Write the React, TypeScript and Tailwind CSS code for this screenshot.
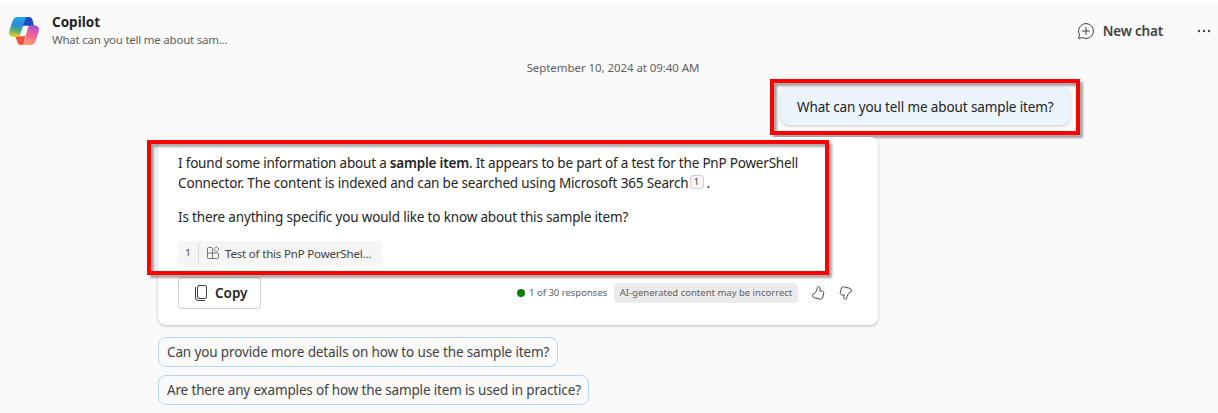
import React from 'react';

function CopilotLogo() {
  return (
    <svg className="h-8 w-8 shrink-0" viewBox="0 0 32 32" fill="none">
      <defs>
        <linearGradient id="left" x1="9" y1="2" x2="6" y2="21" gradientUnits="userSpaceOnUse">
          <stop offset="0" stopColor="#1aa7ee" />
          <stop offset="0.4" stopColor="#2b8bdc" />
          <stop offset="0.7" stopColor="#4fae75" />
          <stop offset="1" stopColor="#e8cb2e" />
        </linearGradient>
        <linearGradient id="right" x1="26" y1="10" x2="19" y2="30" gradientUnits="userSpaceOnUse">
          <stop offset="0" stopColor="#a44fe6" />
          <stop offset="0.45" stopColor="#ee5f94" />
          <stop offset="1" stopColor="#ffa070" />
        </linearGradient>
      </defs>
      <path d="M15 2h6c2 0 3 1 3.600 3l1.400 6h-11z" fill="#1e49c9" />
      <path d="M7 21h10l-1 9h-3c-2 0-3-1-3.500-3z" fill="#f2503f" />
      <path d="M9.500 2H20c-1.500 0-2.500 1.200-3.200 3.500L12 20c-.6 1.500-1.600 2-3 2H5.500c-4 0-5.200-2.500-4-6.500L4 7.500C5 4 6.800 2 9.500 2z" fill="url(#left)" />
      <path d="M22.500 30H13c1.500 0 2.500-1.200 3.200-3.500L20 12.500c.6-1.500 1.600-2 3-2h3.500c4 0 5.200 2.500 4 6.500L28 25c-1 3.500-2.800 5-5.500 5z" fill="url(#right)" />
      <path d="M16.800 10.800h4.200c-1.300.5-1.700 1.500-2.200 3L17 19.700c-.4 1.100-1 1.600-2 1.600h-4c1.200-.5 1.700-1.500 2.200-3l1.700-5.700c.4-1.200.9-1.800 1.900-1.800z" fill="#fff" />
    </svg>
  );
}

function NewChatIcon() {
  return (
    <svg className="h-5 w-5" viewBox="0 0 20 20" fill="none" stroke="#424242" strokeLinecap="round" strokeLinejoin="round">
      <path d="M10 2.500a7.500 7.500 0 1 1-3.500 14.130L2.600 17.500l.9-3.800A7.500 7.500 0 0 1 10 2.500z" />
      <path d="M10 6.500v7M6.500 10h7" />
    </svg>
  );
}

function AppsIcon() {
  return (
    <svg className="h-4 w-4" viewBox="0 0 16 16" fill="none" stroke="#757575" strokeLinejoin="round">
      <path d="M7.500 8V3.500a1 1 0 0 0-1-1h-3a1 1 0 0 0-1 1v9a1 1 0 0 0 1 1h9a1 1 0 0 0 1-1V9a1 1 0 0 0-1-1h-10M7.500 8v5.500" />
      <path d="M11.400 1.800l2.600 2.600-2.600 2.600-2.600-2.600z" />
    </svg>
  );
}

function CopyIcon() {
  return (
    <svg className="h-5 w-5" viewBox="0 0 20 20" fill="none" stroke="#424242" strokeLinecap="round">
      <rect x="6.500" y="2.500" width="9" height="13" rx="1.500" />
      <path d="M4.500 4.500v10.500a2.500 2.500 0 0 0 2.500 2.500h6.500" />
    </svg>
  );
}

function ThumbIcon({ down = false }: { down?: boolean }) {
  return (
    <svg className={down ? 'h-4 w-4 rotate-180' : 'h-4 w-4'} viewBox="0 0 16 16" fill="none" stroke="#424242" strokeLinejoin="round">
      <path d="M8.500 1.600c1.300 0 1.800 1.200 1.600 2.500L9.700 6h2.100c1.400 0 2.200 1 1.900 2.400l-.9 3.600c-.4 1.700-1.700 2.500-3.300 2.100l-5.300-1.500c-.9-.3-1.300-.8-1.500-1.700-.2-1.200.2-1.900 1.300-2.300C6 7.800 6.800 5.500 7.400 2.600c.1-.6.500-1 1.100-1z" />
    </svg>
  );
}

function Highlight({ className }: { className: string }) {
  return <div className={`pointer-events-none absolute border-4 border-[#ff0000] drop-shadow-[3px_3px_1px_rgba(0,0,0,0.35)] ${className}`} />;
}

export default function App() {
  return (
    <div className="h-[413px] w-[1218px] overflow-hidden bg-white pt-[3px] font-['Noto_Sans',sans-serif] text-[13.5px] text-[#242424]">
      <div className="flex h-full flex-col bg-[#fafafa] whitespace-nowrap">
        <header className="flex h-14 shrink-0 items-center pr-1 pl-2">
          <CopilotLogo />
          <div className="-mt-0.5 ml-3 flex-1">
            <h1 className="text-[13.5px] leading-5 font-bold">Copilot</h1>
            <p className="text-[11.5px] leading-4 tracking-[-0.23px] text-[#616161]">What can you tell me about sam...</p>
          </div>
          <button className="flex items-center gap-1.5 font-semibold text-[#424242]">
            <NewChatIcon />
            <span className="ml-px tracking-[-0.2px]">New chat</span>
          </button>
          <svg className="ml-[31px] h-5 w-5" viewBox="0 0 20 20" fill="#424242">
            <circle cx="5" cy="10" r="1.200" /><circle cx="10" cy="10" r="1.200" /><circle cx="15" cy="10" r="1.200" />
          </svg>
        </header>
        <p className="h-[18px] w-[1226px] shrink-0 text-center text-[11.5px] leading-[18px] tracking-[-0.07px] text-[#616161]">September 10, 2024 at 09:40 AM</p>

        <div className="relative mt-[11px] ml-[781px] h-[37px] w-[289px] shrink-0 rounded-lg bg-[#ebf3fc] px-4 leading-[39px] tracking-[-0.12px] shadow-[0_1px_3px_rgba(0,0,0,0.2)]">
          What can you tell me about sample item?
          <Highlight className="-top-[9px] -left-[11px] h-14 w-[310px]" />
        </div>

        <section className="relative mt-3 ml-[158px] h-[188px] w-[720px] shrink-0 rounded-lg bg-white px-5 pt-4 shadow-[0_1px_3px_rgba(0,0,0,0.25)]">
          <p className="leading-5 tracking-[-0.2px]">I found some information about a <b className="font-semibold">sample item</b>. It appears to be part of a test for the PnP PowerShell</p>
          <p className="flex h-5 leading-5">
            <span className="tracking-[-0.155px]">Connector. The content is indexed and can be searched using Microsoft 365 Search</span>
            <span className="mt-0.5 ml-px h-3.5 w-3.5 rounded-[3px] border border-[#d1d1d1] bg-[#f5f5f5] text-center text-[9.5px] leading-3 text-[#424242]">1</span>
            <span className="ml-[3px]">.</span>
          </p>
          <p className="mt-3.5 leading-5 tracking-[-0.165px]">Is there anything specific you would like to know about this sample item?</p>
          <div className="mt-3.5 flex h-6 w-[204px] items-center rounded bg-[#f5f5f5] text-[#424242]">
            <span className="flex h-5 w-[21px] items-center justify-center border-r border-[#d9d9d9] pt-px text-[9.5px]">1</span>
            <span className="ml-1.5"><AppsIcon /></span>
            <span className="ml-1 pt-px text-[11.5px] tracking-[-0.18px]">Test of this PnP PowerShel...</span>
          </div>
          <div className="mt-3 flex h-8 items-center">
            <button className="flex h-8 w-[83px] items-center rounded border border-[#d1d1d1] pl-3 font-semibold">
              <CopyIcon />
              <span className="ml-1">Copy</span>
            </button>
            <span className="ml-64 h-2 w-2 rounded-full bg-[#107c10]" />
            <span className="ml-1 w-[85px] pt-px text-[9.5px] text-[#616161]">1 of 30 responses</span>
            <span className="flex h-5 w-[184px] items-center justify-center rounded bg-[#ebebeb] pt-px text-[9.5px] text-[#616161]">AI-generated content may be incorrect</span>
            <button className="ml-3"><ThumbIcon /></button>
            <button className="ml-3"><ThumbIcon down /></button>
          </div>
          <Highlight className="top-[3px] -left-[11px] h-[135px] w-[682px]" />
        </section>

        <div className="mt-3 ml-[158px] flex flex-col gap-2 text-[#424242]">
          <button className="h-[30px] w-[400px] rounded-lg border border-[#b4d6fa] pl-2 text-left tracking-[-0.13px]">Can you provide more details on how to use the sample item?</button>
          <button className="h-[30px] w-[431px] rounded-lg border border-[#b4d6fa] pl-2 text-left tracking-[-0.16px]">Are there any examples of how the sample item is used in practice?</button>
        </div>
      </div>
    </div>
  );
}
